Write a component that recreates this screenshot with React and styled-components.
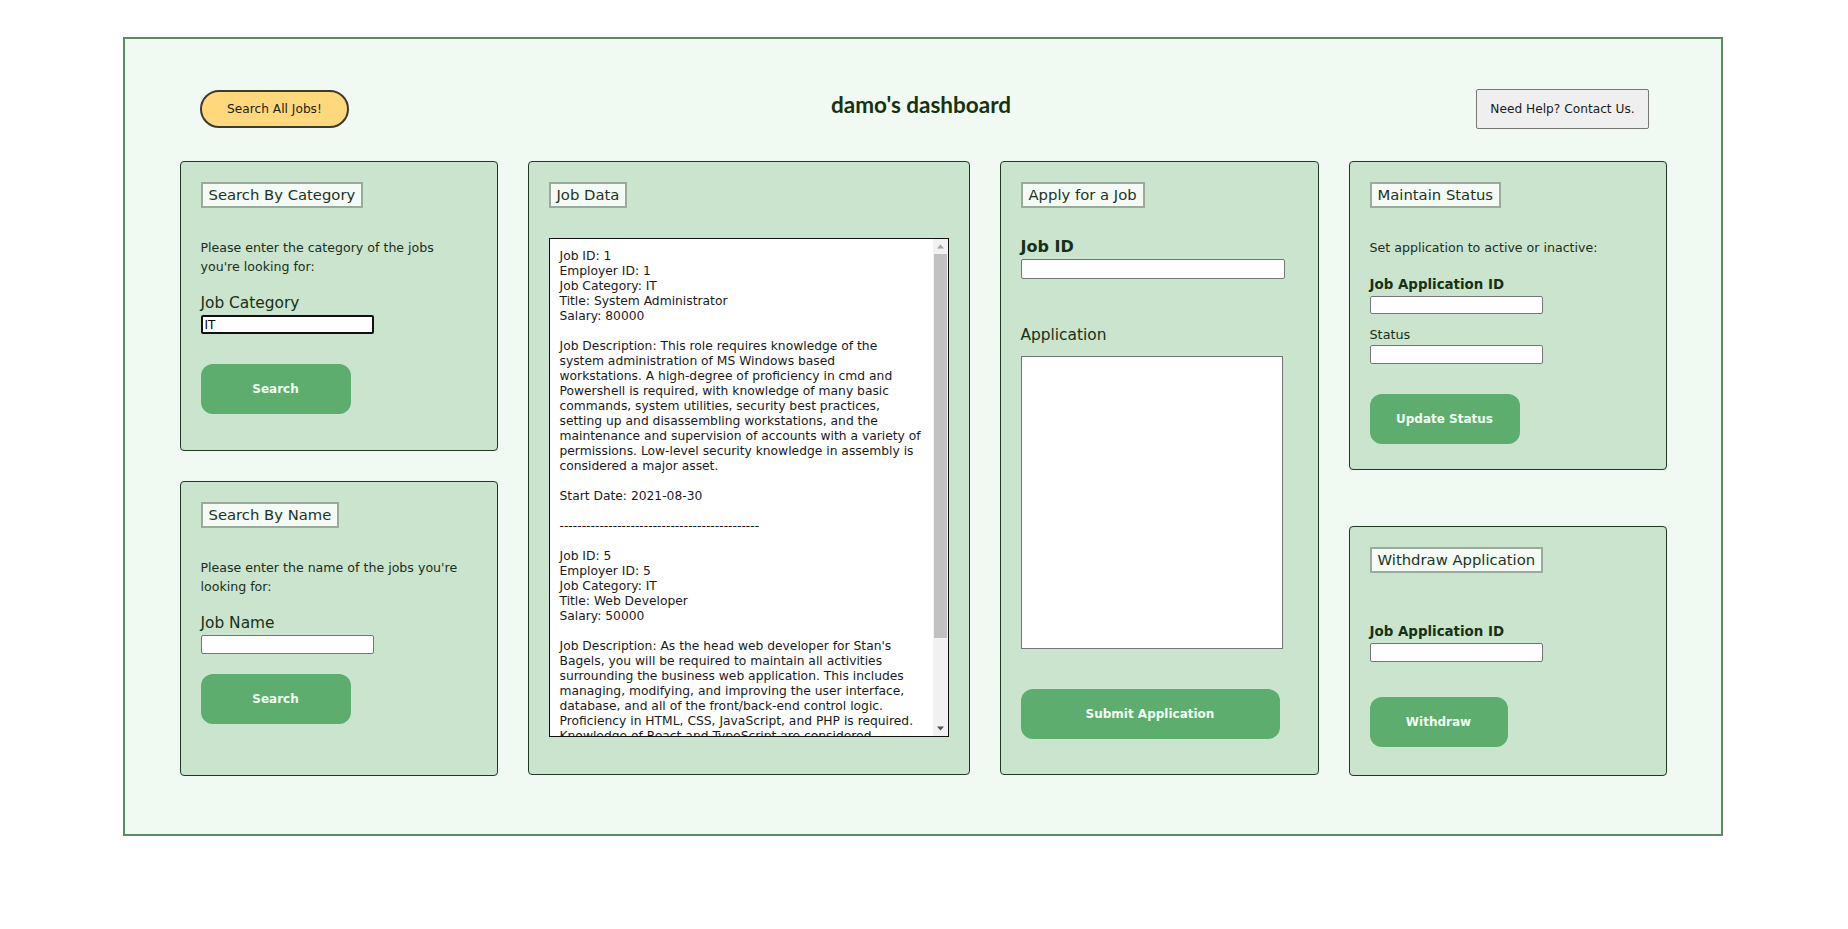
import React from "react";
import styled, { createGlobalStyle } from "styled-components";

const GlobalStyle = createGlobalStyle`
    body {
        margin: 0;
        background: #ffffff;
        font-family: "DejaVu Sans", Verdana, sans-serif;
        color: #1b2e1b;
    }
`;

const jobText = [
    "Job ID: 1",
    "Employer ID: 1",
    "Job Category: IT",
    "Title: System Administrator",
    "Salary: 80000",
    "",
    "Job Description: This role requires knowledge of the",
    "system administration of MS Windows based",
    "workstations. A high-degree of proficiency in cmd and",
    "Powershell is required, with knowledge of many basic",
    "commands, system utilities, security best practices,",
    "setting up and disassembling workstations, and the",
    "maintenance and supervision of accounts with a variety of",
    "permissions. Low-level security knowledge in assembly is",
    "considered a major asset.",
    "",
    "Start Date: 2021-08-30",
    "",
    "---------------------------------------------",
    "",
    "Job ID: 5",
    "Employer ID: 5",
    "Job Category: IT",
    "Title: Web Developer",
    "Salary: 50000",
    "",
    "Job Description: As the head web developer for Stan's",
    "Bagels, you will be required to maintain all activities",
    "surrounding the business web application. This includes",
    "managing, modifying, and improving the user interface,",
    "database, and all of the front/back-end control logic.",
    "Proficiency in HTML, CSS, JavaScript, and PHP is required.",
    "Knowledge of React and TypeScript are considered",
    "a plus.",
    "",
    "Start Date: 2021-09-13",
    "",
    "---------------------------------------------",
].join("\n");

const Arrow = ({ down }) => (
    <svg width="15" height="15" viewBox="0 0 15 15">
        <path d={down ? "M4 5.5 L7.5 9.5 L11 5.5 Z" : "M4 9.5 L7.5 5.5 L11 9.5 Z"} fill={down ? "#505050" : "#a3a3a3"} />
    </svg>
);

const App = () => {
    return (
        <>
            <GlobalStyle />
            <Dashboard>
                <Header>
                    <AllJobsButton>Search All Jobs!</AllJobsButton>
                    <Title>damo's dashboard</Title>
                    <HelpButton>Need Help? Contact Us.</HelpButton>
                </Header>
                <Columns>
                    <Column>
                        <Card h={290}>
                            <Heading>Search By Category</Heading>
                            <Description>Please enter the category of the jobs you're looking for:</Description>
                            <Label>Job Category</Label>
                            <Field w={173} focused defaultValue="IT" />
                            <GreenButton w={150} top={30}>Search</GreenButton>
                        </Card>
                        <Card h={295}>
                            <Heading>Search By Name</Heading>
                            <Description>Please enter the name of the jobs you're looking for:</Description>
                            <Label>Job Name</Label>
                            <Field w={173} />
                            <GreenButton w={150} top={20}>Search</GreenButton>
                        </Card>
                    </Column>
                    <Column>
                        <Card h={614}>
                            <Heading>Job Data</Heading>
                            <DataBox>
                                <DataText>{jobText}</DataText>
                                <ScrollBar>
                                    <Arrow />
                                    <ScrollTrack>
                                        <ScrollThumb />
                                    </ScrollTrack>
                                    <Arrow down />
                                </ScrollBar>
                            </DataBox>
                        </Card>
                    </Column>
                    <Column>
                        <Card h={614}>
                            <Heading>Apply for a Job</Heading>
                            <BoldLabel size={16} top={30}>Job ID</BoldLabel>
                            <Field w={264} h={20} top={2} />
                            <Label top={47}>Application</Label>
                            <ApplicationBox />
                            <GreenButton w={259} top={40}>Submit Application</GreenButton>
                        </Card>
                    </Column>
                    <SpreadColumn>
                        <Card h={309}>
                            <Heading>Maintain Status</Heading>
                            <Description>Set application to active or inactive:</Description>
                            <BoldLabel size={13.4} top={20}>Job Application ID</BoldLabel>
                            <Field w={173} h={18} top={3} />
                            <SmallLabel>Status</SmallLabel>
                            <Field w={173} top={3} />
                            <GreenButton w={150} top={30}>Update Status</GreenButton>
                        </Card>
                        <Card h={250}>
                            <Heading>Withdraw Application</Heading>
                            <BoldLabel size={13.4} top={51}>Job Application ID</BoldLabel>
                            <Field w={173} />
                            <GreenButton w={138} top={35}>Withdraw</GreenButton>
                        </Card>
                    </SpreadColumn>
                </Columns>
            </Dashboard>
        </>
    );
};

export default App;

const Dashboard = styled.main`
    box-sizing: border-box;
    width: 1600px;
    margin: 37px 0 0 123px;
    padding: 50px 54px 58px;
    background: #f0faf2;
    border: 2px solid #5b8c5f;
`;

const Header = styled.header`
    display: grid;
    grid-template-columns: 1fr auto 1fr;
    align-items: center;
    height: 38px;
    padding: 0 18px 0 21px;
    margin-bottom: 34px;
`;

const AllJobsButton = styled.button`
    justify-self: start;
    box-sizing: border-box;
    width: 149px;
    height: 38px;
    border: 2px solid #3b3a2c;
    border-radius: 19px;
    background: #ffd87b;
    color: #1d1d12;
    font-family: "DejaVu Sans", Verdana, sans-serif;
    font-size: 12.2px;
    cursor: pointer;
`;

const Title = styled.h1`
    margin: 0 7px 10px 0;
    font-family: Lato, "Open Sans", sans-serif;
    font-size: 22.5px;
    font-weight: 700;
    color: #16320f;
`;

const HelpButton = styled.button`
    justify-self: end;
    box-sizing: border-box;
    width: 173px;
    height: 40px;
    border: 1px solid #767676;
    border-radius: 2px;
    background: #efefef;
    color: #1a1a1a;
    font-family: "DejaVu Sans", Verdana, sans-serif;
    font-size: 12.2px;
    cursor: pointer;
`;

const Columns = styled.section`
    display: grid;
    grid-template-columns: 318px 442px 319px 318px;
    gap: 30px;
    justify-content: center;
    height: 615px;
`;

const Column = styled.div`
    display: flex;
    flex-direction: column;
    gap: 30px;
`;

const SpreadColumn = styled(Column)`
    justify-content: space-between;
    gap: 0;
`;

const Card = styled.div`
    box-sizing: border-box;
    display: flex;
    flex-direction: column;
    align-items: flex-start;
    height: ${(p) => p.h}px;
    padding: 20px;
    background: #cae4cd;
    border: 1px solid #1e3a22;
    border-radius: 4px;
`;

const Heading = styled.h2`
    margin: 0;
    padding: 2px 6px 2px;
    font-size: 14.8px;
    font-weight: 400;
    line-height: 18px;
    color: #1f331f;
    background: #f3fbf4;
    border: 2px solid #9aab9b;
`;

const Description = styled.p`
    margin: 30px 0 0;
    width: 272px;
    font-size: 12.6px;
    line-height: 19px;
    color: #1b2e1b;
`;

const Label = styled.label`
    display: block;
    margin-top: ${(p) => p.top || 18}px;
    font-size: 15.4px;
    line-height: 18px;
    color: #173117;
`;

const BoldLabel = styled.label`
    display: block;
    margin-top: ${(p) => p.top}px;
    font-size: ${(p) => p.size}px;
    font-weight: 700;
    line-height: 1.16;
    color: #173117;
`;

const SmallLabel = styled.label`
    display: block;
    margin-top: 13px;
    font-size: 12.8px;
    line-height: 15px;
    color: #173117;
`;

const Field = styled.input`
    box-sizing: border-box;
    width: ${(p) => p.w}px;
    height: ${(p) => p.h || 19}px;
    margin-top: ${(p) => (p.top === undefined ? 3 : p.top)}px;
    padding: 0 2px;
    background: #ffffff;
    border: ${(p) => (p.focused ? "2px solid #111111" : "1px solid #767676")};
    border-radius: 2px;
    font-family: "DejaVu Sans", Verdana, sans-serif;
    font-size: 12px;
    color: #000;
    outline: none;
`;

const GreenButton = styled.button`
    width: ${(p) => p.w}px;
    height: 50px;
    margin-top: ${(p) => p.top}px;
    border: none;
    border-radius: 12px;
    background: #5dad6e;
    color: #f2fff2;
    font-family: "DejaVu Sans", Verdana, sans-serif;
    font-size: 12px;
    font-weight: 700;
    cursor: pointer;
`;

const DataBox = styled.div`
    box-sizing: border-box;
    display: flex;
    width: 400px;
    height: 499px;
    margin-top: 30px;
    background: #ffffff;
    border: 1px solid #111111;
    overflow: hidden;
`;

const DataText = styled.div`
    flex: 1;
    padding: 10px;
    overflow: hidden;
    white-space: pre;
    font-size: 12.3px;
    line-height: 15px;
    color: #1a1a1a;
`;

const ScrollBar = styled.div`
    display: flex;
    flex-direction: column;
    width: 15px;
    flex-shrink: 0;
    background: #f1f1f1;
    svg {
        display: block;
        flex-shrink: 0;
    }
`;

const ScrollTrack = styled.div`
    flex: 1;
    padding: 0 1px;
`;

const ScrollThumb = styled.div`
    height: 384px;
    background: #c1c1c1;
`;

const ApplicationBox = styled.textarea`
    box-sizing: border-box;
    width: 262px;
    height: 293px;
    margin-top: 12px;
    border: 1px solid #767676;
    border-radius: 0;
    background: #ffffff;
    resize: none;
`;
